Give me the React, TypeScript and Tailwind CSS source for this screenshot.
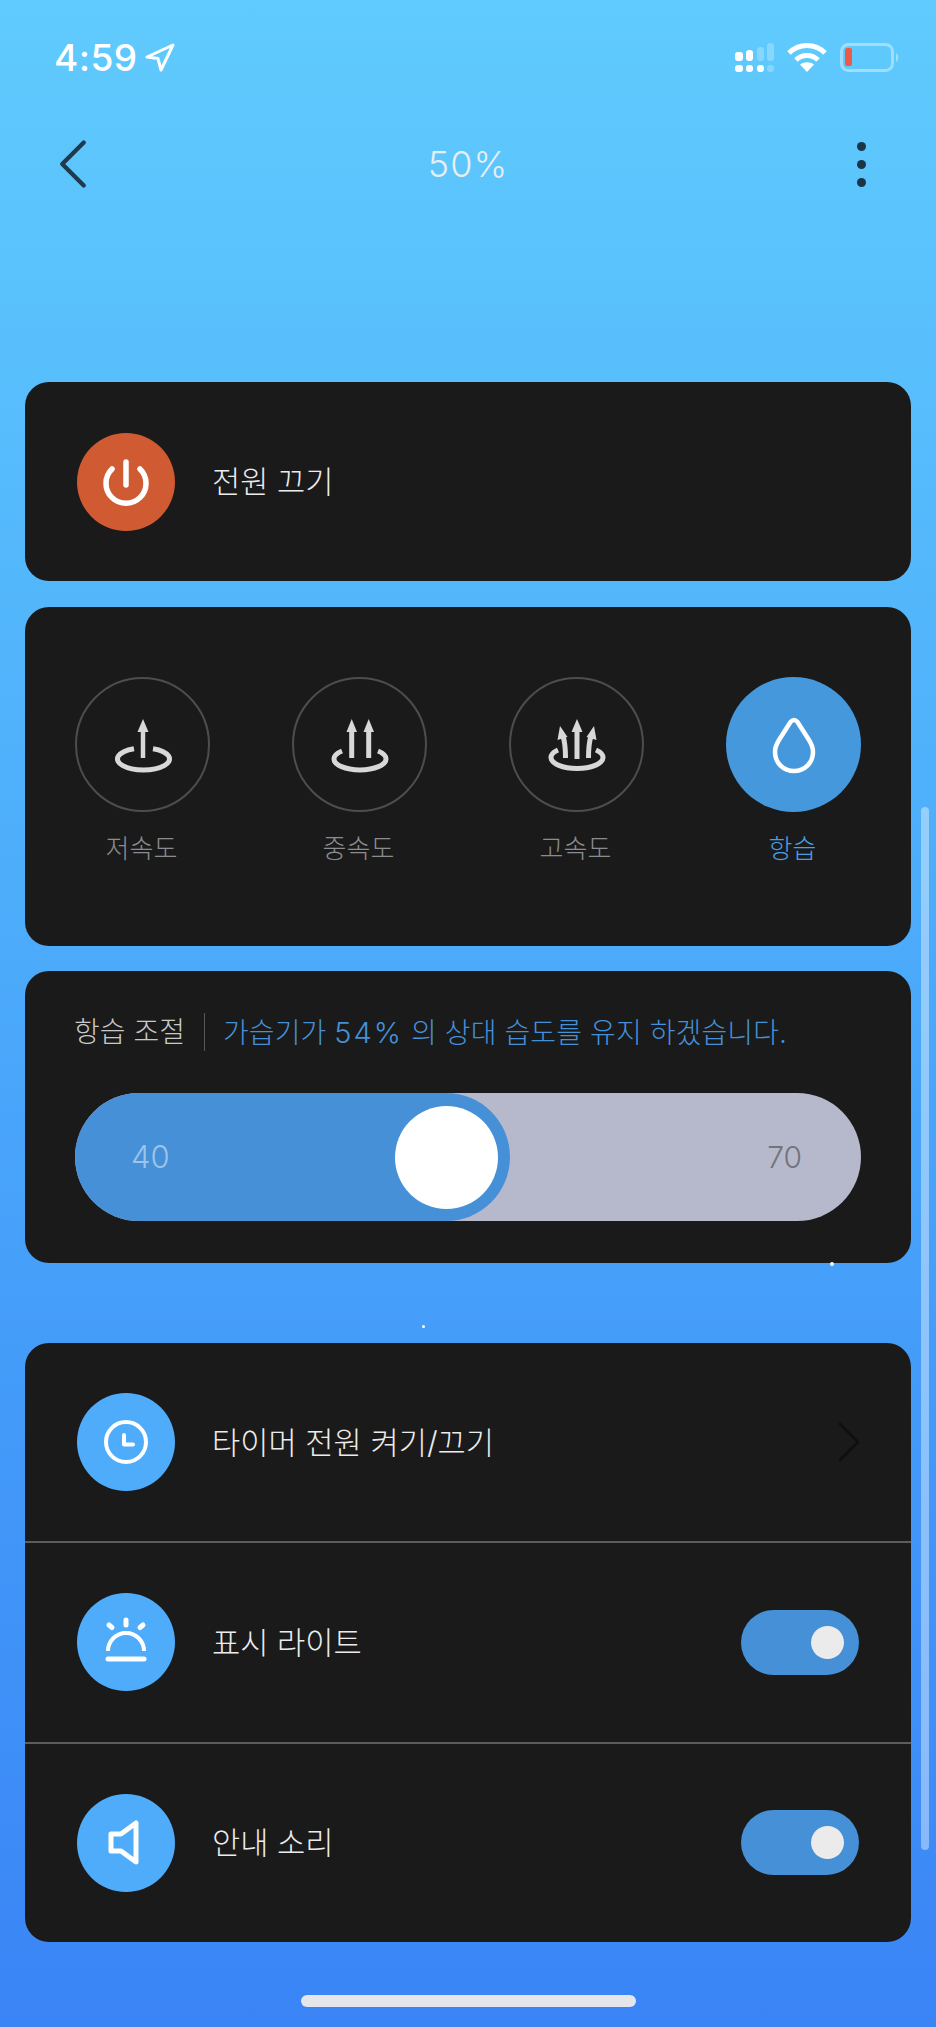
import type { ReactNode } from "react";
import { ChevronLeft, ChevronRight } from "lucide-react";

const font = { fontFamily: 'Inter, "Noto Sans CJK KR", sans-serif' };

function StatusBar() {
  return (
    <div className="flex h-[29px] items-center justify-between pl-[54px] pr-[36px]">
      <div className="flex items-center gap-[6px]">
        <span className="text-[37px] leading-[29px] font-medium tracking-[0.5px] text-white">4:59</span>
        <svg width="31" height="29" viewBox="0 0 31 29" fill="none" stroke="#fff" strokeWidth="3" strokeLinejoin="round">
          <path d="M29 2 L3 14 L14 15.500 L17 27 Z" />
        </svg>
      </div>
      <div className="flex items-center">
        <svg width="40" height="29" viewBox="0 0 40 29" fill="#fff">
          <rect x="0" y="9" width="8" height="9" rx="3" />
          <rect x="11" y="7" width="7" height="11" rx="3" />
          <rect x="22" y="4" width="7" height="14" rx="3" fillOpacity="0.25" />
          <rect x="32" y="0" width="7" height="18" rx="3" fillOpacity="0.25" />
          <rect x="0" y="22" width="8" height="7" rx="3" />
          <rect x="11" y="22" width="7" height="7" rx="3" />
          <rect x="22" y="22" width="7" height="7" rx="3" />
          <rect x="32" y="22" width="7" height="7" rx="3" fillOpacity="0.25" />
        </svg>
        <svg className="ml-[12px]" width="40" height="29" viewBox="0 0 40 29" fill="none" stroke="#fff" strokeWidth="5">
          <path d="M2 10 C12 0 28 0 38 10" />
          <path d="M9 17 C15 11 25 11 31 17" />
          <path d="M20 29 L13 21.500 C17 18.500 23 18.500 27 21.500 Z" fill="#fff" stroke="none" />
        </svg>
        <svg className="ml-[13px]" width="60" height="29" viewBox="0 0 60 29" fill="none">
          <rect x="1.500" y="1.500" width="51" height="26" rx="7" stroke="#fff" strokeOpacity="0.4" strokeWidth="3" />
          <rect x="5" y="5" width="7" height="18" rx="2" fill="#ef5a44" />
          <path d="M56 10 C59 11 59 18 56 19 Z" fill="#fff" fillOpacity="0.4" />
        </svg>
      </div>
    </div>
  );
}

function NavBar() {
  return (
    <div className="mt-[57px] grid h-[70px] grid-cols-[1fr_auto_1fr] items-center px-[30px]">
      <ChevronLeft className="-my-[8px] h-[86px] w-[86px] text-[#1f3a4c]" strokeWidth={1.2} />
      <span className="text-[36px] font-light tracking-[1px] text-[#e6eef2]">50%</span>
      <div className="mr-[40px] flex flex-col gap-[9px] justify-self-end">
        <span className="h-[9px] w-[9px] rounded-full bg-[#1c3546]" />
        <span className="h-[9px] w-[9px] rounded-full bg-[#1c3546]" />
        <span className="h-[9px] w-[9px] rounded-full bg-[#1c3546]" />
      </div>
    </div>
  );
}

function IconCircle({ color, children }: { color: string; children: ReactNode }) {
  return (
    <div className={`flex h-[98px] w-[98px] shrink-0 items-center justify-center rounded-full ${color}`}>
      <svg width="70" height="70" viewBox="-35 -35 70 70" fill="none" stroke="#fff" strokeLinecap="round" strokeLinejoin="round">
        {children}
      </svg>
    </div>
  );
}

function Toggle() {
  return (
    <div className="flex h-[65px] w-[118px] items-center justify-end rounded-full bg-[#4590d7] pr-[15px]">
      <span className="h-[33px] w-[33px] rounded-full bg-[#ebebeb]" />
    </div>
  );
}

function Row({ icon, label, right, color = "bg-[#4facfb]" }: { icon: ReactNode; label: string; right?: ReactNode; color?: string }) {
  return (
    <div className="flex flex-1 items-center px-[52px]">
      <IconCircle color={color}>{icon}</IconCircle>
      <span className="ml-[37px] pt-[1px] text-[30.700px] font-light text-[#ececec]">{label}</span>
      <div className="ml-auto">{right}</div>
    </div>
  );
}

const arrowPaths: Record<string, ReactNode> = {
  low: (
    <>
      <path d="M-9 3.700 A26 11 0 1 0 10 3.700" strokeWidth="5" />
      <path d="M0 13 V-13" strokeWidth="4.500" />
      <path d="M0 -26 L-5.500 -13 H5.500 Z" fill="#d8d8d8" stroke="none" />
    </>
  ),
  mid: (
    <>
      <path d="M-18 6 A26 11 0 1 0 18 6" strokeWidth="5" />
      <path d="M-8.300 13 V-13" strokeWidth="5" />
      <path d="M-8.300 -26 L-13.500 -13 H-3 Z" fill="#d8d8d8" stroke="none" />
      <path d="M8.700 13 V-13" strokeWidth="5" />
      <path d="M8.700 -26 L3.500 -13 H14 Z" fill="#d8d8d8" stroke="none" />
    </>
  ),
  high: (
    <>
      <path d="M-19 5 A26 11 0 1 0 19 5" strokeWidth="5" />
      <path d="M0 14 V-13" strokeWidth="5" />
      <path d="M0 -26 L-5.500 -13 H5.500 Z" fill="#d8d8d8" stroke="none" />
      <path d="M-11.500 13 C-11.500 4 -11.500 -1 -14 -9" strokeWidth="5" />
      <path d="M-17 -19 L-19.500 -5 L-9.500 -8 Z" fill="#d8d8d8" stroke="none" />
      <path d="M11.500 13 C11.500 4 11.500 -1 14 -9" strokeWidth="5" />
      <path d="M17 -19 L19.500 -5 L9.500 -8 Z" fill="#d8d8d8" stroke="none" />
    </>
  ),
};

function ModeButton({ kind, label }: { kind: string; label: string }) {
  return (
    <div className="flex w-[135px] flex-col items-center">
      <div className="flex h-[135px] w-[135px] items-center justify-center rounded-full border-2 border-[#4b4e51]">
        <svg width="80" height="80" viewBox="-40 -40 80 80" fill="none" stroke="#d8d8d8">
          {arrowPaths[kind]}
        </svg>
      </div>
      <span className="mt-[17px] pr-[2px] text-[26px] leading-[40px] font-light text-[#8a8c8f]">{label}</span>
    </div>
  );
}

function HumidityButton() {
  return (
    <div className="flex w-[135px] flex-col items-center">
      <div className="flex h-[135px] w-[135px] items-center justify-center rounded-full bg-[#4698dd]">
        <svg width="80" height="80" viewBox="-40 -40 80 80" fill="none" stroke="#fff" strokeWidth="4.500" strokeLinejoin="round">
          <path d="M-3.500 -23 Q0 -27 3.500 -23 L15 -5 C17.500 -1 19 3 19 7 C19 18 10.500 26 0 26 C-10.500 26 -19 18 -19 7 C-19 3 -17.500 -1 -15 -5 Z" />
        </svg>
      </div>
      <span className="mt-[17px] pr-[2px] text-[26px] leading-[40px] font-light text-[#4a9ee2]">항습</span>
    </div>
  );
}

function Slider() {
  return (
    <div className="mt-[42px] flex h-[128px] items-center justify-between rounded-full bg-[#b6b9cb]">
      <div className="flex h-full w-[435px] items-center justify-between rounded-full bg-[#4590d7] pl-[56px] pr-[12px]">
        <span className="text-[31px] font-light text-[#9cc4e8]">40</span>
        <span className="h-[103px] w-[103px] rounded-full bg-white" />
      </div>
      <span className="mr-[59px] text-[30px] font-light text-[#73747a]">70</span>
    </div>
  );
}

export default function App() {
  return (
    <div
      className="relative h-[2027px] w-[936px] overflow-hidden bg-gradient-to-b from-[#60cbfd] to-[#3a84f6] pt-[43px]"
      style={font}
    >
      <StatusBar />
      <NavBar />

      <div className="mx-[25px] mt-[183px] flex flex-col">
        <div className="flex h-[199px] flex-col rounded-[24px] bg-[#1a1a1a]">
          <Row
            color="bg-[#d05a31]"
            label="전원 끄기"
            icon={
              <>
                <path d="M-14 -13 A20 20 0 1 0 14 -13" strokeWidth="5.500" />
                <path d="M0 -20 V3" strokeWidth="5.500" />
              </>
            }
          />
        </div>

        <div className="mt-[26px] flex h-[339px] justify-between rounded-[24px] bg-[#1a1a1a] pt-[70px] pl-[50px] pr-[50px]">
          <ModeButton kind="low" label="저속도" />
          <ModeButton kind="mid" label="중속도" />
          <ModeButton kind="high" label="고속도" />
          <HumidityButton />
        </div>

        <div className="mt-[25px] h-[292px] rounded-[24px] bg-[#1a1a1a] px-[50px] pt-[42px]">
          <div className="flex h-[38px] items-center text-[28px] font-light">
            <span className="-ml-px text-[#c9c9c9]">항습 조절</span>
            <span className="ml-[19px] mr-[18px] h-[38px] w-px bg-[#55585b]" />
            <span className="pt-px tracking-[0.1px] text-[#4590d7]">
              가습기가 <span className="text-[29px] tracking-[2px]">54%</span> 의 상대 습도를 유지 하겠습니다.
            </span>
          </div>
          <Slider />
        </div>

        <div className="mt-[80px] flex h-[599px] flex-col rounded-[24px] bg-[#1a1a1a]">
          <Row
            label="타이머 전원 켜기/끄기"
            right={<ChevronRight className="-mr-[26px] h-[72px] w-[72px] text-[#0f0f0f]" strokeWidth={0.9} />}
            icon={
              <>
                <circle cx="0" cy="0" r="20" strokeWidth="4" />
                <path d="M-2 -7 V2.500 H7" strokeWidth="4" />
              </>
            }
          />
          <div className="h-[2px] bg-[#5f5b5c]" />
          <Row
            label="표시 라이트"
            right={<Toggle />}
            icon={
              <>
                <path d="M-18 9 A18 18 0 0 1 18 9" strokeWidth="4" strokeLinecap="butt" />
                <path d="M-18 17 H18" strokeWidth="5" />
                <path d="M0 -22 V-17" strokeWidth="5" />
                <path d="M-17 -17 L-14 -14.500" strokeWidth="5" />
                <path d="M17 -17 L14 -14.500" strokeWidth="5" />
              </>
            }
          />
          <div className="h-[2px] bg-[#5f5b5c]" />
          <Row
            label="안내 소리"
            right={<Toggle />}
            icon={<path d="M-15 -9 H-5 L10 -20 V19 L-5 8 H-15 Z" strokeWidth="5" />}
          />
        </div>
      </div>

      {/* overlays: scroll indicator, stray dots, home bar */}
      <div className="absolute left-[921px] top-[807px] h-[1043px] w-[8px] rounded-full bg-white/40" />
      <div className="absolute left-[830px] top-[1262px] h-[4px] w-[4px] rounded-full bg-white" />
      <div className="absolute left-[422px] top-[1325px] h-[3px] w-[3px] rounded-full bg-white" />
      <div className="absolute left-[301px] top-[1995px] h-[12px] w-[335px] rounded-full bg-[#e4e6ea]" />
    </div>
  );
}
